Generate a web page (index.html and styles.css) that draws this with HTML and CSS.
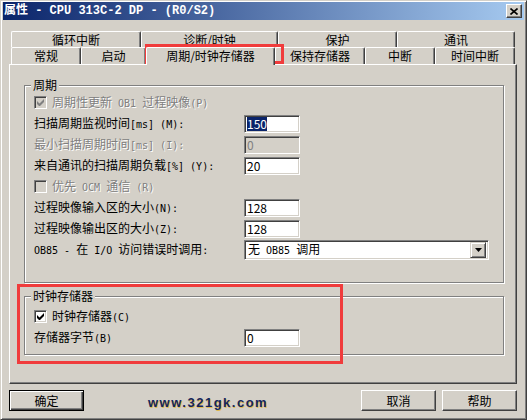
FILE: index.html
```html
<!DOCTYPE html>
<html lang="zh-CN">
<head>
<meta charset="utf-8">
<title>属性 - CPU 313C-2 DP</title>
<link rel="stylesheet" href="styles.css">
</head>
<body>
<div class="window">
  <div class="titlebar">
    <span class="title">属性 - CPU 313C-2 DP - (R0/S2)</span>
    <span class="close"><svg width="8" height="7" viewBox="0 0 8 7"><path d="M0.5 0.5L7.5 6.5M7.5 0.5L0.5 6.5" stroke="#000" stroke-width="1.6" fill="none"/></svg></span>
  </div>

  <div class="tabs">
    <div class="tabrow back">
      <div class="tab" style="width:130px">循环中断</div>
      <div class="tab" style="width:137px">诊断/时钟</div>
      <div class="tab" style="width:119px">保护</div>
      <div class="tab" style="width:118px">通讯</div>
    </div>
    <div class="tabrow front">
      <div class="tab" style="width:70px">常规</div>
      <div class="tab" style="width:65px">启动</div>
      <div class="tab active" style="width:129px">周期/时钟存储器</div>
      <div class="tab" style="width:90px">保持存储器</div>
      <div class="tab" style="width:70px">中断</div>
      <div class="tab" style="width:80px">时间中断</div>
    </div>
  </div>

  <div class="panel">
    <fieldset class="group g1">
      <legend>周期</legend>
      <div class="row disabled">
        <span class="cb"><svg width="7" height="7" viewBox="0 0 7 7"><path d="M0 2v3l2 2h1l4-4V0L2.5 4.5z" fill="#808080"/></svg></span>
        <span class="cbtext">周期性更新<span class="m"> OB1 </span>过程映像<span class="m">(P)</span></span>
      </div>
      <div class="row">
        <span class="label">扫描周期监视时间<span class="m">[ms] (M):</span></span>
        <span class="input"><span class="hl">150</span></span>
      </div>
      <div class="row disabled">
        <span class="label">最小扫描周期时间<span class="m">[ms] (I):</span></span>
        <span class="input off">0</span>
      </div>
      <div class="row">
        <span class="label">来自通讯的扫描周期负载<span class="m">[%] (Y):</span></span>
        <span class="input">20</span>
      </div>
      <div class="row disabled">
        <span class="cb"></span>
        <span class="cbtext">优先<span class="m"> OCM </span>通信<span class="m"> (R)</span></span>
      </div>
      <div class="row">
        <span class="label">过程映像输入区的大小<span class="m">(N):</span></span>
        <span class="input">128</span>
      </div>
      <div class="row">
        <span class="label">过程映像输出区的大小<span class="m">(Z):</span></span>
        <span class="input">128</span>
      </div>
      <div class="row">
        <span class="label"><span class="m">OB85 - </span>在<span class="m"> I/O </span>访问错误时调用<span class="m">:</span></span>
        <span class="select">
          <span class="seltext">无<span class="m"> OB85 </span>调用</span>
          <span class="drop"><svg width="7" height="4" viewBox="0 0 7 4"><path d="M0 0h7L3.5 4z" fill="#000"/></svg></span>
        </span>
      </div>
    </fieldset>

    <fieldset class="group g2">
      <legend>时钟存储器</legend>
      <div class="row">
        <span class="cb on"><svg width="7" height="7" viewBox="0 0 7 7"><path d="M0 2v3l2 2h1l4-4V0L2.5 4.5z" fill="#000"/></svg></span>
        <span class="cbtext">时钟存储器<span class="m">(C)</span></span>
      </div>
      <div class="row">
        <span class="label">存储器字节<span class="m">(B)</span></span>
        <span class="input">0</span>
      </div>
    </fieldset>
  </div>

  <div class="buttons">
    <span class="btn default">确定</span>
    <span class="watermark">www.321gk.com</span>
    <span class="btn cancel">取消</span>
    <span class="btn">帮助</span>
  </div>

  <div class="mark mark-tab"></div>
  <div class="mark mark-group"></div>
</div>
</body>
</html>
```

FILE: styles.css
```css
* { box-sizing: border-box; }

html, body {
  margin: 0;
  padding: 0;
  background: #D4D0C8;
}

body {
  font-family: "Noto Sans CJK SC", sans-serif;
  font-size: 12px;
  color: #000;
}

.m {
  font-family: "DejaVu Sans Mono", "Liberation Mono", monospace;
  font-size: 10px;
}

.window {
  position: relative;
  width: 527px;
  height: 420px;
  background: #D4D0C8;
  border: 1px solid;
  border-color: #D4D0C8 #404040 #404040 #D4D0C8;
  box-shadow: inset 1px 1px 0 #fff, inset -1px -1px 0 #808080;
  padding: 1px 2px 0 2px;
}

/* Title bar */
.titlebar {
  height: 18px;
  display: flex;
  align-items: center;
  padding-left: 1px;
  background: linear-gradient(to right, #0A246A, #A6CAF0);
  color: #fff;
}

.title {
  font-family: "Liberation Mono", "Noto Sans CJK SC", monospace;
  font-weight: bold;
  font-size: 12px;
  line-height: 14px;
  white-space: pre;
}

.close {
  margin-left: auto;
  margin-right: 2px;
  width: 16px;
  height: 14px;
  display: flex;
  align-items: center;
  justify-content: center;
  background: #D4D0C8;
  border: 1px solid;
  border-color: #fff #404040 #404040 #fff;
  box-shadow: inset -1px -1px 0 #808080;
}

/* Tabs */
.tabs {
  margin: 11px 0 0 8px;
  width: 504px;
}

.tabrow {
  display: flex;
}

.tabrow.back { height: 16px; }
.tabrow.front { height: 17px; }

.tab {
  flex: none;
  height: 100%;
  text-align: center;
  line-height: 15px;
  border-top: 1px solid #fff;
  border-left: 1px solid #fff;
  border-right: 1px solid #404040;
  box-shadow: inset -1px 0 0 #808080;
  border-radius: 2px 2px 0 0;
  background: #D4D0C8;
}

.tab.active {
  position: relative;
  z-index: 1;
  height: 18px;
  margin-bottom: -1px;
}

/* Panel */
.panel {
  margin-left: 6px;
  width: 508px;
  height: 320px;
  border: 1px solid;
  border-color: #fff #404040 #404040 #fff;
  box-shadow: inset -1px -1px 0 #808080;
  padding-top: 13px;
}

.group {
  margin: 0 0 0 14px;
  width: 480px;
  min-width: 0;
  border: 1px solid #808080;
  box-shadow: inset 1px 1px 0 #fff, 1px 1px 0 #fff;
  padding: 0 8px 0 9px;
}

.group legend {
  margin-left: -3px;
  padding: 0 2px;
  line-height: 14px;
  background: #D4D0C8;
}

.g1 { padding-bottom: 22px; }
.g2 { margin-top: 6px; padding-top: 3px; padding-bottom: 6px; }

.row {
  display: flex;
  align-items: center;
  height: 21px;
  line-height: 14px;
  white-space: pre;
}

.label {
  width: 210px;
  flex: none;
}

.row.disabled .label,
.row.disabled .cbtext {
  color: #808080;
  text-shadow: 1px 1px 0 #fff;
}

.input {
  width: 56px;
  height: 18px;
  display: flex;
  align-items: center;
  padding-left: 2px;
  background: #fff;
  border: 1px solid;
  border-color: #808080 #fff #fff #808080;
  box-shadow: inset 1px 1px 0 #404040, inset -1px -1px 0 #D4D0C8;
}

.input.off {
  background: #D4D0C8;
  color: #808080;
}

.hl {
  background: #0A246A;
  color: #fff;
}

.select {
  width: 245px;
  height: 20px;
  display: flex;
  align-items: center;
  padding: 0 2px 0 3px;
  background: #fff;
  border: 1px solid;
  border-color: #808080 #fff #fff #808080;
  box-shadow: inset 1px 1px 0 #404040, inset -1px -1px 0 #D4D0C8;
}

.seltext { flex: 1; }

.drop {
  width: 16px;
  height: 16px;
  display: flex;
  align-items: center;
  justify-content: center;
  background: #D4D0C8;
  border: 1px solid;
  border-color: #D4D0C8 #404040 #404040 #D4D0C8;
  box-shadow: inset 1px 1px 0 #fff, inset -1px -1px 0 #808080;
}

.cb {
  width: 13px;
  height: 13px;
  flex: none;
  display: flex;
  align-items: center;
  justify-content: center;
  margin-right: 5px;
  background: #D4D0C8;
  border: 1px solid;
  border-color: #808080 #fff #fff #808080;
  box-shadow: inset 1px 1px 0 #404040, inset -1px -1px 0 #D4D0C8;
}

.cb.on { background: #fff; }

/* Buttons */
.buttons {
  display: flex;
  align-items: center;
  margin: 6px 0 0 6px;
  width: 508px;
  height: 21px;
}

.btn {
  width: 75px;
  height: 21px;
  display: flex;
  align-items: center;
  justify-content: center;
  line-height: 14px;
  border: 1px solid;
  border-color: #fff #404040 #404040 #fff;
  box-shadow: inset -1px -1px 0 #808080;
}

.btn.default {
  border-color: #000;
  box-shadow: inset 1px 1px 0 #fff, inset -1px -1px 0 #404040, inset -2px -2px 0 #808080;
}

.btn.cancel { margin-left: auto; margin-right: 6px; }

.watermark {
  margin: 4px 0 0 64px;
  font-family: "Liberation Sans", sans-serif;
  font-weight: bold;
  font-size: 13px;
  letter-spacing: 1.5px;
  color: #14245C;
  text-shadow: 1px 1px 0 #E0B850;
}

/* Annotation overlays */
.mark {
  position: absolute;
  border: 3px solid #F03C3C;
}

.mark-tab {
  left: 144px;
  top: 43px;
  width: 139px;
  height: 20px;
}

.mark-group {
  left: 16px;
  top: 283px;
  width: 326px;
  height: 80px;
}
```
